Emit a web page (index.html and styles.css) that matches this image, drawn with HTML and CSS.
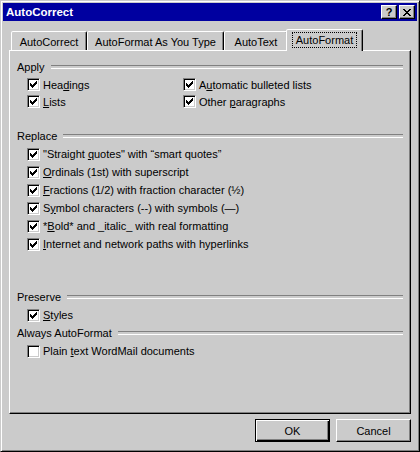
FILE: index.html
```html
<!DOCTYPE html>
<html>
<head>
<meta charset="utf-8">
<title>AutoCorrect</title>
<link rel="stylesheet" href="styles.css">
</head>
<body>
<div class="window">
  <div class="titlebar">
    <span class="title">AutoCorrect</span>
    <div class="title-buttons">
      <span class="tbtn">?</span>
      <span class="tbtn close">
        <svg width="8" height="7" viewBox="0 0 8 7" shape-rendering="crispEdges"><path d="M0 0h2v1h-2zM6 0h2v1h-2zM1 1h2v1h-2zM5 1h2v1h-2zM2 2h4v1h-4zM3 3h2v1h-2zM2 4h4v1h-4zM1 5h2v1h-2zM5 5h2v1h-2zM0 6h2v1h-2zM6 6h2v1h-2z" fill="#000"/></svg>
      </span>
    </div>
  </div>

  <div class="tabs">
    <div class="tab t1">AutoCorrect</div>
    <div class="tab t2">AutoFormat As You Type</div>
    <div class="tab t3">AutoText</div>
    <div class="tab t4 selected"><span class="focus">AutoFormat</span></div>
  </div>

  <div class="panel">
    <div class="group-title apply-title"><span>Apply</span></div>
    <div class="grid two">
      <label class="row short"><span class="cb on"></span><span>Hea<u>d</u>ings</span></label>
      <label class="row short"><span class="cb on"></span><span>A<u>u</u>tomatic bulleted lists</span></label>
      <label class="row short"><span class="cb on"></span><span><u>L</u>ists</span></label>
      <label class="row short"><span class="cb on"></span><span>Other <u>p</u>aragraphs</span></label>
    </div>

    <div class="group-title replace-title"><span>Replace</span></div>
    <div class="grid">
      <label class="row"><span class="cb on"></span><span>"Straight <u>q</u>uotes" with “smart quotes”</span></label>
      <label class="row"><span class="cb on"></span><span><u>O</u>rdinals (1st) with superscript</span></label>
      <label class="row"><span class="cb on"></span><span><u>F</u>ractions (1/2) with fraction character (½)</span></label>
      <label class="row"><span class="cb on"></span><span>S<u>y</u>mbol characters (--) with symbols (—)</span></label>
      <label class="row"><span class="cb on"></span><span>*<u>B</u>old* and _italic_ with real formatting</span></label>
      <label class="row"><span class="cb on"></span><span><u>I</u>nternet and network paths with hyperlinks</span></label>
    </div>

    <div class="group-title preserve-title"><span>Preserve</span></div>
    <div class="grid">
      <label class="row"><span class="cb on"></span><span><u>S</u>tyles</span></label>
    </div>

    <div class="group-title"><span>Always AutoFormat</span></div>
    <div class="grid">
      <label class="row"><span class="cb"></span><span>Plain <u>t</u>ext WordMail documents</span></label>
    </div>
  </div>

  <div class="footer">
    <button class="btn default">OK</button>
    <button class="btn">Cancel</button>
  </div>
</div>
</body>
</html>
```

FILE: styles.css
```css
* { box-sizing: border-box; }

html, body {
  margin: 0;
  padding: 0;
  background: #cbcbcb;
}

body {
  font-family: "Liberation Sans", Arial, sans-serif;
  font-size: 11px;
  color: #000;
}

.window {
  width: 420px;
  height: 452px;
  background: #cbcbcb;
  border: 1px solid;
  border-color: #cbcbcb #000 #000 #cbcbcb;
  box-shadow: inset 1px 1px #fff, inset -1px -1px #808080;
  padding: 2px;
  display: flex;
  flex-direction: column;
}

.titlebar {
  height: 18px;
  background: #0000a0;
  display: flex;
  align-items: center;
  justify-content: space-between;
  padding: 0 2px 0 3px;
}

.title {
  color: #fff;
  font-weight: bold;
  font-size: 11.5px;
  letter-spacing: 0;
}

.title-buttons {
  display: flex;
  gap: 2px;
}

.tbtn {
  width: 16px;
  height: 14px;
  background: #cbcbcb;
  border: 1px solid;
  border-color: #fff #000 #000 #fff;
  box-shadow: inset -1px -1px #808080;
  display: flex;
  align-items: center;
  justify-content: center;
  font-weight: bold;
  font-size: 11px;
  line-height: 1;
  color: #000;
}

.tabs {
  margin: 8px 6px 0 6px;
  height: 21px;
  padding-left: 2px;
  display: flex;
  align-items: flex-end;
}

.tab {
  height: 19px;
  background: #cbcbcb;
  border: 1px solid;
  border-bottom: none;
  border-color: #fff #000 transparent #fff;
  border-radius: 2px 2px 0 0;
  box-shadow: inset -1px 0 #808080;
  display: flex;
  align-items: center;
  justify-content: center;
  padding-top: 1px;
  white-space: nowrap;
}

.t1 { width: 76px; }
.t2 { width: 137px; }
.t3 { width: 64px; }
.t4 { width: 73px; }

.tab.selected {
  width: 77px;
  height: 22px;
  margin: 0 -2px -1px -2px;
  position: relative;
  z-index: 1;
  padding-top: 0;
  padding-bottom: 2px;
}

.focus {
  outline: 1px dotted #000;
  outline-offset: 1px;
  padding: 0 2px;
}

.panel {
  margin: 0 6px;
  height: 364px;
  border: 1px solid;
  border-color: #fff #000 #000 #fff;
  box-shadow: inset -1px -1px #808080;
  padding: 7px 7px 0 7px;
  display: flex;
  flex-direction: column;
}

.group-title {
  height: 18px;
  display: flex;
  align-items: center;
  gap: 6px;
  white-space: nowrap;
}

.group-title::after {
  content: "";
  flex: 1;
  height: 2px;
  border-top: 1px solid #808080;
  border-bottom: 1px solid #fff;
}

.replace-title { margin-top: 17px; }
.preserve-title { margin-top: 35px; }

.grid {
  display: grid;
  grid-template-columns: 1fr;
  padding-left: 10px;
}

.grid.two {
  grid-template-columns: 156px 1fr;
}

.row {
  height: 18px;
  display: flex;
  align-items: center;
  gap: 3px;
  white-space: nowrap;
}

.row.short { height: 17px; }

u {
  text-decoration: underline;
  text-underline-offset: 1px;
}

.cb {
  width: 13px;
  height: 13px;
  flex: none;
  background: #fff;
  border: 1px solid;
  border-color: #808080 #fff #fff #808080;
  box-shadow: inset 1px 1px #000, inset -1px -1px #cbcbcb;
  position: relative;
}

.cb.on::after {
  content: "";
  position: absolute;
  left: 2px;
  top: 2px;
  width: 7px;
  height: 7px;
  background:
    linear-gradient(#000, #000) 6px 0 / 1px 3px no-repeat,
    linear-gradient(#000, #000) 5px 1px / 1px 3px no-repeat,
    linear-gradient(#000, #000) 4px 2px / 1px 3px no-repeat,
    linear-gradient(#000, #000) 3px 3px / 1px 3px no-repeat,
    linear-gradient(#000, #000) 2px 4px / 1px 3px no-repeat,
    linear-gradient(#000, #000) 1px 3px / 1px 3px no-repeat,
    linear-gradient(#000, #000) 0 2px / 1px 3px no-repeat;
}

.footer {
  display: flex;
  justify-content: flex-end;
  gap: 6px;
  margin: 5px 6px 0 0;
}

.btn {
  width: 75px;
  height: 23px;
  font-family: "Liberation Sans", Arial, sans-serif;
  font-size: 11px;
  color: #000;
  background: #cbcbcb;
  border: 1px solid;
  border-color: #fff #000 #000 #fff;
  box-shadow: inset -1px -1px #808080;
  padding: 0;
  padding-top: 1px;
}

.btn.default {
  border: 1px solid #000;
  box-shadow: inset 1px 1px #fff, inset -1px -1px #000, inset -2px -2px #808080;
}
```
